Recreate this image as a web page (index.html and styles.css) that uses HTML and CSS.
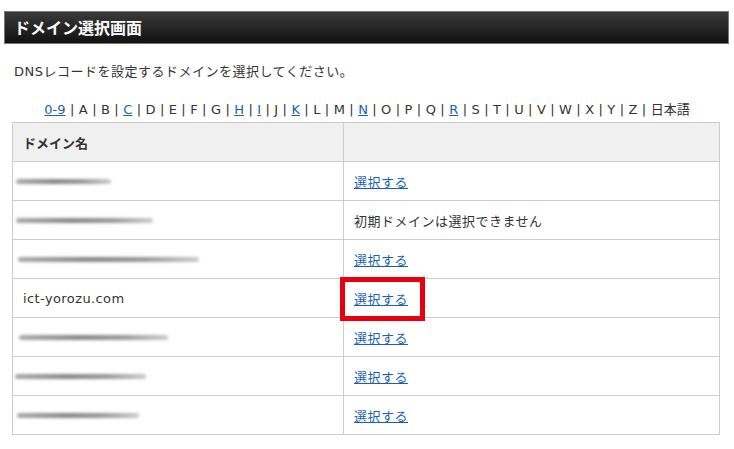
FILE: index.html
```html
<!DOCTYPE html>
<html lang="ja">
<head>
<meta charset="utf-8">
<title>ドメイン選択画面</title>
<link rel="stylesheet" href="styles.css">
</head>
<body>
<div class="page">
  <h1 class="title-bar">ドメイン選択画面</h1>
  <p class="lead">DNSレコードを設定するドメインを選択してください。</p>
  <div class="alpha">
    <a href="#">0-9</a> | A | B | <a href="#">C</a> | D | E | F | G | <a href="#">H</a> | <a href="#">I</a> | J | <a href="#">K</a> | L | M | <a href="#">N</a> | O | P | Q | <a href="#">R</a> | S | T | U | V | W | X | Y | Z | 日本語
  </div>
  <table class="domains">
    <thead>
      <tr><th class="c-name">ドメイン名</th><th class="c-act"></th></tr>
    </thead>
    <tbody>
      <tr><td><span class="blur" style="width:95px;margin-left:3px"></span></td><td><a href="#">選択する</a></td></tr>
      <tr><td><span class="blur" style="width:137px;margin-left:3px"></span></td><td class="muted">初期ドメインは選択できません</td></tr>
      <tr><td><span class="blur" style="width:181px;margin-left:5px"></span></td><td><a href="#">選択する</a></td></tr>
      <tr><td class="plain">ict-yorozu.com</td><td><span class="hl"><a href="#">選択する</a><span class="mark"></span></span></td></tr>
      <tr><td><span class="blur" style="width:149px;margin-left:6px"></span></td><td><a href="#">選択する</a></td></tr>
      <tr><td><span class="blur" style="width:131px;margin-left:2px"></span></td><td><a href="#">選択する</a></td></tr>
      <tr><td><span class="blur" style="width:122px;margin-left:4px"></span></td><td><a href="#">選択する</a></td></tr>
    </tbody>
  </table>
</div>
</body>
</html>
```

FILE: styles.css
```css
html, body {
  margin: 0;
  padding: 0;
  background: #fff;
}
body {
  font-family: "DejaVu Sans", "Noto Sans CJK JP", sans-serif;
  font-size: 13px;
  color: #333;
}
.page {
  padding-top: 11px;
}
.title-bar {
  margin: 0 5px 0 4px;
  height: 31px;
  border: 1px solid #777;
  background: linear-gradient(#3a3a3a, #111);
  color: #fff;
  font-family: "Noto Sans CJK JP", sans-serif;
  font-size: 16px;
  font-weight: bold;
  line-height: 31px;
  padding-left: 9px;
}
.lead {
  margin: 19px 0 0 14px;
  line-height: 18px;
  letter-spacing: 0.5px;
}
.alpha {
  margin-top: 20px;
  text-align: center;
  line-height: 18px;
  font-size: 13px;
  word-spacing: 0.3px;
}
a {
  color: #1a5fb4;
  text-decoration: underline;
}
.domains {
  margin: 3px 0 0 12px;
  width: 708px;
  border-collapse: collapse;
  border: 1px solid #ccc;
  table-layout: fixed;
}
.domains th, .domains td {
  border: 1px solid #ccc;
  height: 38px;
  padding: 0 0 0 10px;
  text-align: left;
  vertical-align: middle;
  letter-spacing: 0.5px;
}
.domains th {
  background: #f0f0f0;
  font-family: "Noto Sans CJK JP", sans-serif;
  font-weight: bold;
  font-size: 13px;
  color: #333;
  letter-spacing: 0;
}
.c-name { width: 320px; }
.domains td:first-child {
  padding-left: 0;
}
.domains td.plain {
  padding-left: 10px;
  letter-spacing: 0.4px;
}
.blur {
  display: block;
  height: 5px;
  border-radius: 3px;
  background: linear-gradient(90deg, #aaa, #888 40%, #999 70%, #ccc);
  filter: blur(1.6px);
}
.muted {
  color: #333;
}
.hl {
  position: relative;
  display: inline-block;
}
.mark {
  position: absolute;
  left: -14px;
  top: -12px;
  width: 75px;
  height: 34px;
  border: 5px solid #e8000f;
  pointer-events: none;
}
```
